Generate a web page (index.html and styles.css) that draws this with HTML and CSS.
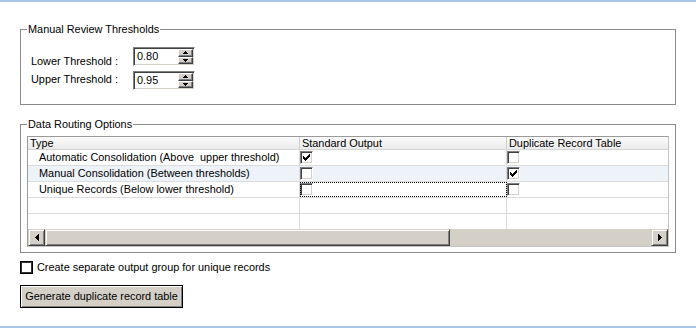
FILE: index.html
```html
<!DOCTYPE html>
<html>
<head>
<meta charset="utf-8">
<link rel="stylesheet" href="styles.css">
</head>
<body>
<div class="page">
  <div class="topline"></div>
  <div class="content">
    <fieldset class="group g1">
      <legend>Manual Review Thresholds</legend>
      <div class="thresholds">
        <div class="labels">
          <div class="lbl">Lower Threshold :</div>
          <div class="lbl">Upper Threshold :</div>
        </div>
        <div class="spins">
          <div class="spin">
            <span class="spin-val">0.80</span>
            <span class="spin-btns">
              <span class="sbtn"><svg width="5" height="3" viewBox="0 0 5 3"><path d="M2 0h1v1h1v1h1v1H0V2h1V1h1z"/></svg></span>
              <span class="sbtn"><svg width="5" height="3" viewBox="0 0 5 3"><path d="M0 0h5v1H4v1H3v1H2V2H1V1H0z"/></svg></span>
            </span>
          </div>
          <div class="spin">
            <span class="spin-val">0.95</span>
            <span class="spin-btns">
              <span class="sbtn"><svg width="5" height="3" viewBox="0 0 5 3"><path d="M2 0h1v1h1v1h1v1H0V2h1V1h1z"/></svg></span>
              <span class="sbtn"><svg width="5" height="3" viewBox="0 0 5 3"><path d="M0 0h5v1H4v1H3v1H2V2H1V1H0z"/></svg></span>
            </span>
          </div>
        </div>
      </div>
    </fieldset>

    <fieldset class="group g2">
      <legend>Data Routing Options</legend>
      <div class="grid">
        <div class="grow ghead">
          <div class="cell">Type</div>
          <div class="cell">Standard Output</div>
          <div class="cell">Duplicate Record Table</div>
        </div>
        <div class="grow">
          <div class="cell name">Automatic Consolidation (Above&nbsp; upper threshold)</div>
          <div class="cell"><span class="cb"><svg class="tick" width="7" height="7" viewBox="0 0 7 7"><path d="M6 0h1v1h-1z M5 1h2v1h-2z M0 2h1v1h-1z M4 2h3v1h-3z M0 3h2v1h-2z M3 3h3v1h-3z M0 4h5v1h-5z M1 5h3v1h-3z M2 6h1v1h-1z"/></svg></span></div>
          <div class="cell"><span class="cb"></span></div>
        </div>
        <div class="grow alt">
          <div class="cell name">Manual Consolidation (Between thresholds)</div>
          <div class="cell"><span class="cb"></span></div>
          <div class="cell"><span class="cb"><svg class="tick" width="7" height="7" viewBox="0 0 7 7"><path d="M6 0h1v1h-1z M5 1h2v1h-2z M0 2h1v1h-1z M4 2h3v1h-3z M0 3h2v1h-2z M3 3h3v1h-3z M0 4h5v1h-5z M1 5h3v1h-3z M2 6h1v1h-1z"/></svg></span></div>
        </div>
        <div class="grow">
          <div class="cell name">Unique Records (Below lower threshold)</div>
          <div class="cell focus"><span class="cb"></span></div>
          <div class="cell"><span class="cb"></span></div>
        </div>
        <div class="grow">
          <div class="cell"></div>
          <div class="cell"></div>
          <div class="cell"></div>
        </div>
        <div class="grow last">
          <div class="cell"></div>
          <div class="cell"></div>
          <div class="cell"></div>
        </div>
        <div class="hscroll">
          <span class="raised sb-btn"><svg width="4" height="7" viewBox="0 0 4 7"><path d="M3 0h1v7H3V6H2V5H1V4H0V3h1V2h1V1h1z"/></svg></span>
          <span class="raised sb-thumb"></span>
          <span class="sb-track"></span>
          <span class="raised sb-btn"><svg width="4" height="7" viewBox="0 0 4 7"><path d="M0 0h1v1h1v1h1v1h1v1H3v1H2v1H1v1H0z"/></svg></span>
        </div>
      </div>
    </fieldset>

    <div class="option">
      <span class="cb-flat"></span>
      <span>Create separate output group for unique records</span>
    </div>

    <button class="btn" type="button">Generate duplicate record table</button>
  </div>
  <div class="bottomline"></div>
</div>
</body>
</html>
```

FILE: styles.css
```css
html, body {
  margin: 0;
  padding: 0;
  background: #ffffff;
}

body {
  font-family: "Liberation Sans", Arial, sans-serif;
  font-size: 10.9px;
  line-height: 13px;
  color: #000000;
}

.page {
  height: 329px;
  display: flex;
  flex-direction: column;
}

.topline {
  height: 2px;
  flex-shrink: 0;
  background: #a9c4e8;
}

.bottomline {
  height: 2px;
  flex-shrink: 0;
  margin-top: auto;
  margin-bottom: 1px;
  background: #a9c4e8;
}

.content {
  padding: 0 20px;
}

.group {
  margin: 0;
  border: 1px solid #8a8a8a;
  min-width: 0;
}

.group legend {
  padding: 0 1px;
  line-height: 13px;
}

/* ---------- Manual review thresholds ---------- */
.g1 {
  margin-top: 21px;
  padding: 0 0 14px 10px;
}

.g1 legend {
  margin-left: -4px;
}

.thresholds {
  display: flex;
}

.labels {
  width: 102px;
  padding-top: 19px;
  display: flex;
  flex-direction: column;
  gap: 5px;
}

.spins {
  padding-top: 11px;
  display: flex;
  flex-direction: column;
  gap: 5px;
}

.spin {
  box-sizing: border-box;
  width: 62px;
  height: 19px;
  display: flex;
  border: 1px solid;
  border-color: #808080 #ffffff #ffffff #808080;
  box-shadow: inset 1px 1px #404040, inset -1px -1px #d4d0c8;
  padding: 1px;
  background: #ffffff;
}

.spin-val {
  flex: 1;
  padding-left: 2px;
  line-height: 15px;
}

.spin-btns {
  width: 15px;
  display: flex;
  flex-direction: column;
}

.sbtn {
  flex: 1;
  box-sizing: border-box;
  display: flex;
  align-items: center;
  justify-content: center;
  background: #d4d0c8;
  border: 1px solid;
  border-color: #ffffff #404040 #404040 #ffffff;
  box-shadow: inset -1px -1px #808080;
}

.sbtn svg {
  display: block;
  shape-rendering: crispEdges;
}

/* ---------- Data routing options ---------- */
.g2 {
  margin-top: 13px;
  padding: 5px 6px 5px 6px;
}

.g2 legend {
  margin-left: 0;
}

.grid {
  box-sizing: border-box;
  width: 642px;
  border: 1px solid;
  border-color: #9a9a9a #c4c4c4 #c4c4c4 #9a9a9a;
}

.grow {
  display: grid;
  grid-template-columns: 272px 207px 161px;
  height: 16px;
  box-sizing: border-box;
  border-bottom: 1px solid #dcdcdc;
}

.grow.last {
  height: 15px;
  border-bottom: 0;
}

.grow.alt {
  background: #eef2f9;
}

.cell {
  box-sizing: border-box;
  display: flex;
  align-items: center;
  border-right: 1px solid #dcdcdc;
  white-space: nowrap;
  overflow: hidden;
}

.cell:last-child {
  border-right: 0;
}

.cell.name {
  padding-left: 11px;
}

.ghead {
  height: 13px;
  border-bottom: 1px solid #d6d6d6;
  background: linear-gradient(#fbfbfb, #ebebeb);
}

.ghead .cell {
  padding-left: 2px;
  line-height: 12px;
  border-right-color: #cfcfcf;
}

.cell.focus {
  outline: 1px dotted #000000;
  outline-offset: -1px;
}

.cb {
  box-sizing: border-box;
  width: 13px;
  height: 13px;
  border: 1px solid;
  border-color: #808080 #ffffff #ffffff #808080;
  box-shadow: inset 1px 1px #404040, inset -1px -1px #d4d0c8;
  background: #ffffff;
}

.tick {
  display: block;
  margin: 2px 0 0 2px;
  shape-rendering: crispEdges;
}

.hscroll {
  display: flex;
  height: 17px;
  background: #d4d0c8;
}

.raised {
  box-sizing: border-box;
  background: #d4d0c8;
  border: 1px solid;
  border-color: #d4d0c8 #404040 #404040 #d4d0c8;
  box-shadow: inset 1px 1px #ffffff, inset -1px -1px #808080;
}

.sb-btn {
  width: 17px;
  height: 17px;
  display: flex;
  align-items: center;
  justify-content: center;
}

.sb-btn svg {
  display: block;
  shape-rendering: crispEdges;
}

.sb-thumb {
  width: 405px;
  height: 17px;
}

.sb-track {
  flex: 1;
}

/* ---------- Bottom controls ---------- */
.option {
  margin-top: 8px;
  display: flex;
  align-items: center;
  gap: 4px;
  height: 13px;
}

.cb-flat {
  box-sizing: border-box;
  width: 13px;
  height: 13px;
  border: 1px solid #000000;
  box-shadow: inset 0 0 0 1px #333333;
  background: #ffffff;
}

.btn {
  display: block;
  margin-top: 11px;
  box-sizing: border-box;
  width: 163px;
  height: 23px;
  padding: 0;
  font-family: "Liberation Sans", Arial, sans-serif;
  font-size: 10.9px;
  line-height: 13px;
  color: #000000;
  background: #d4d0c8;
  border: 1px solid #000000;
  box-shadow: inset 1px 1px #ffffff, inset -1px -1px #808080;
  text-align: center;
}
```
